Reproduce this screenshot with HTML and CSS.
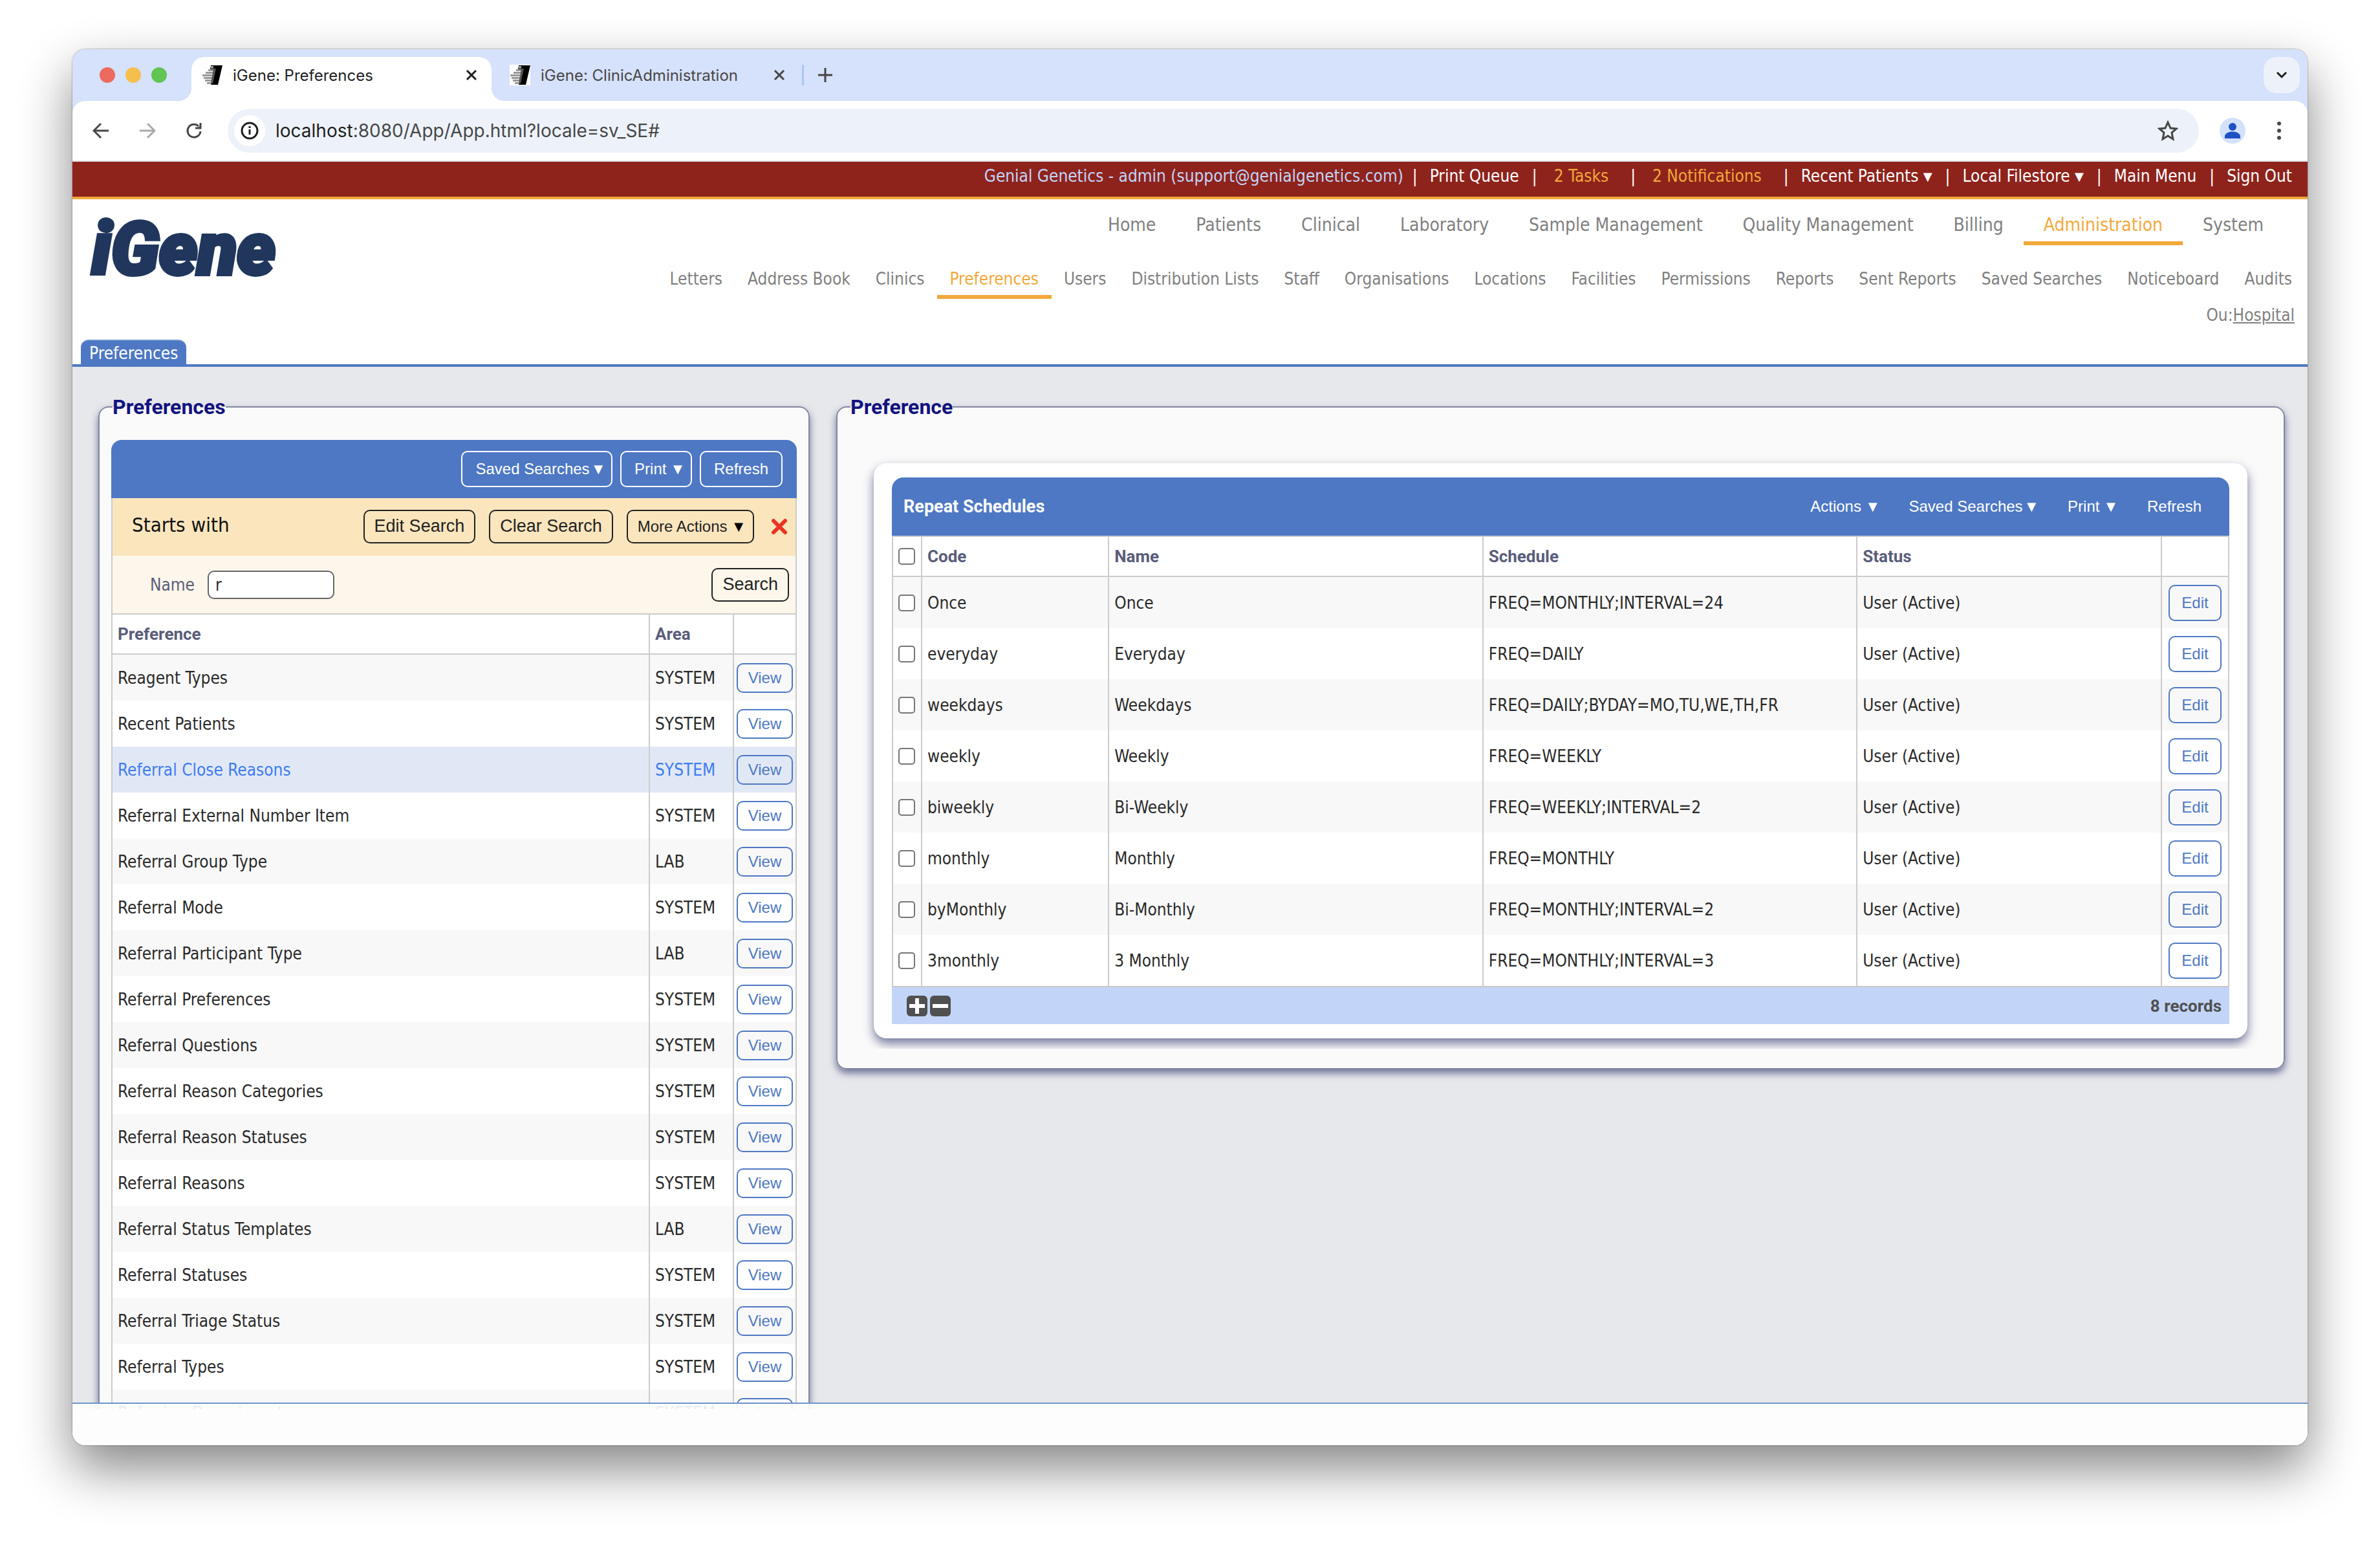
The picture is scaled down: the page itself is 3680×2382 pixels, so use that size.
FILE: index.html
```html
<!DOCTYPE html>
<html lang="en">
<head>
  <meta charset="UTF-8">
  <title>iGene: Preferences</title>
  <link rel="stylesheet" href="styles.css">
</head>
<body>
  <div class="window">
    <div class="tab-strip">
      <div class="lights">
        <span class="light red"></span>
        <span class="light yellow"></span>
        <span class="light green"></span>
      </div>
      <div class="tab active">
        <svg class="favicon" viewBox="0 0 32 32"><path d="M14 1h18l-7 30H14l5-24h-6z" fill="#000"/><path d="M14 2h4v4h-4zM10 7h8v3h-8zM6 11h11v3H6zM1 15h15v3H1zM3 19h13v3H3zM5 23h10v3H5zM8 27h7v3H8z" fill="#999"/><path d="M18 6h4l-5 23h-3z" fill="#555"/></svg>
        <span class="tab-title">iGene: Preferences</span>
        <button class="tab-close" aria-label="Close tab"><svg viewBox="0 0 18 18"><path d="M2 2l14 14M16 2L2 16"/></svg></button>
      </div>
      <div class="tab">
        <svg class="favicon" viewBox="0 0 32 32"><path d="M0 0h32v32H0z" fill="#fff"/><path d="M14 1h18l-7 30H14l5-24h-6z" fill="#000"/><path d="M14 2h4v4h-4zM10 7h8v3h-8zM6 11h11v3H6zM1 15h15v3H1zM3 19h13v3H3zM5 23h10v3H5zM8 27h7v3H8z" fill="#999"/><path d="M18 6h4l-5 23h-3z" fill="#555"/></svg>
        <span class="tab-title">iGene: ClinicAdministration</span>
        <button class="tab-close" aria-label="Close tab"><svg viewBox="0 0 18 18"><path d="M2 2l14 14M16 2L2 16"/></svg></button>
      </div>
      <button class="new-tab" aria-label="New tab"><svg viewBox="0 0 22 22"><path d="M11 0v22M0 11h22"/></svg></button>
      <button class="tab-search" aria-label="Search tabs"><svg viewBox="0 0 18 12"><path d="M2 2l7 7 7-7"/></svg></button>
    </div>

    <div class="toolbar">
      <button class="tool" aria-label="Back"><svg viewBox="0 0 26 26"><path d="M25 13H3M13 2L2 13l11 11"/></svg></button>
      <button class="tool disabled" aria-label="Forward"><svg viewBox="0 0 26 26"><path d="M1 13h22M13 2l11 11-11 11"/></svg></button>
      <button class="tool" aria-label="Reload"><svg viewBox="0 0 26 26"><path d="M20 6a10 10 0 1 0 3 8M23 1v8h-8"/><path d="M24 4v6h-7z" fill="currentColor" stroke="none"/></svg></button>
      <div class="omnibox">
        <span class="site-info"><svg viewBox="0 0 28 28"><circle cx="14" cy="14" r="12"/><path d="M14 12v8M14 7v3"/></svg></span>
        <span class="url"><b>localhost</b>:8080/App/App.html?locale=sv_SE#</span>
        <button class="star" aria-label="Bookmark"><svg viewBox="0 0 32 32"><path d="M16 3l4 9 9 1-7 6 2 10-8-5-8 5 2-10-7-6 9-1z"/></svg></button>
      </div>
      <button class="avatar" aria-label="Profile"><svg viewBox="0 0 40 40"><circle cx="20" cy="14" r="6"/><path d="M8 32v-3c0-10 24-10 24 0v3z"/></svg></button>
      <button class="dots" aria-label="Menu"><svg viewBox="0 0 8 28"><circle cx="4" cy="3" r="3"/><circle cx="4" cy="14" r="3"/><circle cx="4" cy="25" r="3"/></svg></button>
    </div>

    <div class="user-bar">
      <a href="#" class="account">Genial Genetics - admin (support@genialgenetics.com)</a>|
      <a href="#">Print Queue</a>|
      <a href="#" class="alert">2 Tasks</a>|
      <a href="#" class="alert">2 Notifications</a>|
      <a href="#">Recent Patients <span class="arrow">▼</span></a>|
      <a href="#">Local Filestore <span class="arrow">▼</span></a>|
      <a href="#">Main Menu</a>|
      <a href="#">Sign Out</a>
    </div>

    <header class="header">
      <div class="logo">iGene</div>
      <div class="menus">
        <nav class="main-nav">
          <a href="#">Home</a>
          <a href="#">Patients</a>
          <a href="#">Clinical</a>
          <a href="#">Laboratory</a>
          <a href="#">Sample Management</a>
          <a href="#">Quality Management</a>
          <a href="#">Billing</a>
          <a href="#" class="current">Administration</a>
          <a href="#">System</a>
        </nav>
        <nav class="sub-nav">
          <a href="#">Letters</a>
          <a href="#">Address Book</a>
          <a href="#">Clinics</a>
          <a href="#" class="current">Preferences</a>
          <a href="#">Users</a>
          <a href="#">Distribution Lists</a>
          <a href="#">Staff</a>
          <a href="#">Organisations</a>
          <a href="#">Locations</a>
          <a href="#">Facilities</a>
          <a href="#">Permissions</a>
          <a href="#">Reports</a>
          <a href="#">Sent Reports</a>
          <a href="#">Saved Searches</a>
          <a href="#">Noticeboard</a>
          <a href="#">Audits</a>
        </nav>
        <div class="ou">Ou:<a href="#">Hospital</a></div>
      </div>
    </header>
    <div class="page-tabs"><a href="#" class="page-tab">Preferences</a></div>

    <main class="content">
      <fieldset class="panel">
        <legend>Preferences</legend>
        <div class="list">
          <div class="list-bar">
            <button class="outline">Saved Searches <span class="arrow">▼</span></button>
            <button class="outline">Print <span class="arrow spaced">▼</span></button>
            <button class="outline">Refresh</button>
          </div>
          <div class="search-bar">
            <span class="search-title">Starts with</span>
            <button class="dark">Edit Search</button>
            <button class="dark">Clear Search</button>
            <button class="dark small">More Actions <span class="arrow spaced">▼</span></button>
            <button class="remove" aria-label="Remove search"><svg viewBox="0 0 26 26"><path d="M4 4l18 18M22 4L4 22"/></svg></button>
          </div>
          <form class="search-form">
            <label for="name">Name</label>
            <input type="text" id="name" name="name" value="r">
            <button type="button" class="dark">Search</button>
          </form>
          <table class="grid preferences">
            <colgroup><col><col class="col-area"><col class="col-view"></colgroup>
            <thead>
              <tr><th>Preference</th><th>Area</th><th></th></tr>
            </thead>
            <tbody id="preferenceRows"></tbody>
          </table>
        </div>
      </fieldset>

      <fieldset class="panel">
        <legend>Preference</legend>
        <div class="card-wrap">
          <div class="card">
            <div class="card-bar">
              <h2>Repeat Schedules</h2>
              <button>Actions <span class="arrow spaced">▼</span></button>
              <button>Saved Searches <span class="arrow">▼</span></button>
              <button>Print <span class="arrow spaced">▼</span></button>
              <button>Refresh</button>
            </div>
            <table class="grid schedules">
              <colgroup><col class="col-check"><col class="col-code"><col class="col-name"><col class="col-schedule"><col><col class="col-edit"></colgroup>
              <thead>
                <tr>
                  <th class="check"><input type="checkbox" aria-label="Select all"></th>
                  <th>Code</th><th>Name</th><th>Schedule</th><th>Status</th><th></th>
                </tr>
              </thead>
              <tbody id="scheduleRows"></tbody>
            </table>
            <div class="card-footer">
              <button class="square" aria-label="Add"><svg viewBox="0 0 32 32"><path d="M16 4v24M4 16h24"/></svg></button>
              <button class="square" aria-label="Remove"><svg viewBox="0 0 32 32"><path d="M4 16h24"/></svg></button>
              <span class="count">8 records</span>
            </div>
          </div>
        </div>
      </fieldset>
    </main>
    <footer class="status-bar"></footer>
  </div>

  <script>
    const preferences = [
      ['Reagent Types', 'SYSTEM'],
      ['Recent Patients', 'SYSTEM'],
      ['Referral Close Reasons', 'SYSTEM'],
      ['Referral External Number Item', 'SYSTEM'],
      ['Referral Group Type', 'LAB'],
      ['Referral Mode', 'SYSTEM'],
      ['Referral Participant Type', 'LAB'],
      ['Referral Preferences', 'SYSTEM'],
      ['Referral Questions', 'SYSTEM'],
      ['Referral Reason Categories', 'SYSTEM'],
      ['Referral Reason Statuses', 'SYSTEM'],
      ['Referral Reasons', 'SYSTEM'],
      ['Referral Status Templates', 'LAB'],
      ['Referral Statuses', 'SYSTEM'],
      ['Referral Triage Status', 'SYSTEM'],
      ['Referral Types', 'SYSTEM'],
      ['Referring Department', 'SYSTEM']
    ];

    const schedules = [
      ['Once', 'Once', 'FREQ=MONTHLY;INTERVAL=24'],
      ['everyday', 'Everyday', 'FREQ=DAILY'],
      ['weekdays', 'Weekdays', 'FREQ=DAILY;BYDAY=MO,TU,WE,TH,FR'],
      ['weekly', 'Weekly', 'FREQ=WEEKLY'],
      ['biweekly', 'Bi-Weekly', 'FREQ=WEEKLY;INTERVAL=2'],
      ['monthly', 'Monthly', 'FREQ=MONTHLY'],
      ['byMonthly', 'Bi-Monthly', 'FREQ=MONTHLY;INTERVAL=2'],
      ['3monthly', '3 Monthly', 'FREQ=MONTHLY;INTERVAL=3']
    ];

    const selected = 'Referral Close Reasons';

    document.getElementById('preferenceRows').innerHTML = preferences.map(([name, area]) => `
      <tr class="${name === selected ? 'selected' : ''}">
        <td>${name}</td>
        <td>${area}</td>
        <td class="action"><button>View</button></td>
      </tr>
    `).join('');

    document.getElementById('scheduleRows').innerHTML = schedules.map(([code, name, rule]) => `
      <tr>
        <td class="check"><input type="checkbox" aria-label="Select ${code}"></td>
        <td>${code}</td>
        <td>${name}</td>
        <td>${rule}</td>
        <td>User (Active)</td>
        <td class="action"><button>Edit</button></td>
      </tr>
    `).join('');
  </script>
</body>
</html>
```

FILE: styles.css
```css
* {
  box-sizing: border-box;
}
body {
  margin: 0;
  padding: 76px 112px 148px;
  height: 100vh;
  background: #fff;
  font-family: "DejaVu Sans Condensed", "Noto Sans", sans-serif;
  font-size: 26px;
  color: #2a2a2a;
}
a {
  color: inherit;
  text-decoration: none;
}
button {
  margin: 0;
  padding: 0;
  border: none;
  background: none;
  font-family: "Liberation Sans", Arial, sans-serif;
  font-size: 24px;
  color: inherit;
  cursor: pointer;
}
svg {
  display: block;
  fill: none;
  stroke: currentColor;
}
.favicon {
  width: 32px;
  height: 32px;
  stroke: none;
}
.window {
  display: flex;
  flex-direction: column;
  height: 100%;
  overflow: hidden;
  border-radius: 20px;
  background: linear-gradient(#d6e1fb 50%, #fff 50%);
  box-shadow: 0 0 2px rgba(0,0,0,0.6), 0 36px 80px rgba(0,0,0,0.48);
}

/* browser chrome */
.tab-strip {
  display: flex;
  align-items: center;
  height: 80px;
  padding: 0 12px 0 42px;
  background: #d6e1fb;
  font-family: Inter, sans-serif;
  font-size: 24px;
  color: #474747;
}
.lights {
  display: flex;
  gap: 16px;
  margin-right: 38px;
}
.light {
  width: 24px;
  height: 24px;
  border-radius: 50%;
}
.red {
  background: #ed6a5e;
}
.yellow {
  background: #f5bf4f;
}
.green {
  background: #61c554;
}
.tab {
  display: flex;
  align-items: center;
  align-self: flex-end;
  gap: 16px;
  width: 480px;
  height: 68px;
  padding: 0 26px 12px 28px;
}
.tab.active {
  position: relative;
  width: 464px;
  padding: 0 22px 12px 16px;
  border-radius: 20px 20px 0 0;
  background: #fff;
  color: #1f1f1f;
}
/* flared feet of the active tab */
.tab.active::before, .tab.active::after {
  content: "";
  position: absolute;
  bottom: 0;
  width: 20px;
  height: 20px;
}
.tab.active::before {
  left: -20px;
  background: radial-gradient(circle at 0 0, #d6e1fb 20px, #fff 20px);
}
.tab.active::after {
  right: -20px;
  background: radial-gradient(circle at 100% 0, #d6e1fb 20px, #fff 20px);
}
.tab-title {
  flex: 1;
  white-space: nowrap;
}
.tab-close svg {
  width: 18px;
  height: 18px;
  stroke-width: 3;
}
.new-tab {
  padding: 5px 22px;
  border-left: 3px solid #a8c7fa;
  color: #444;
}
.new-tab svg {
  width: 22px;
  height: 22px;
  stroke-width: 3;
}
.tab-search {
  display: grid;
  place-items: center;
  width: 56px;
  height: 56px;
  margin-left: auto;
  border-radius: 20px;
  background: #edf2fa;
  color: #1f1f1f;
}
.tab-search svg {
  width: 18px;
  height: 12px;
  stroke-width: 3;
}
.toolbar {
  display: flex;
  align-items: center;
  height: 94px;
  padding: 0 40px 0 31px;
  border-bottom: 2px solid #dfe1e0;
  border-radius: 20px 20px 0 0;
  background: #fff;
  color: #474747;
}
.tool {
  margin-right: 46px;
}
.tool svg {
  width: 26px;
  height: 26px;
  stroke-width: 3;
}
.tool.disabled {
  color: #aaa;
}
.omnibox {
  display: flex;
  flex: 1;
  align-items: center;
  gap: 16px;
  height: 68px;
  margin-left: -7px;
  padding: 0 32px 0 10px;
  border-radius: 34px;
  background: #edf2fa;
  font-family: Inter, sans-serif;
  font-size: 28px;
}
.site-info {
  display: grid;
  place-items: center;
  width: 48px;
  height: 48px;
  border-radius: 50%;
  background: #fff;
  color: #1f1f1f;
}
.site-info svg {
  width: 28px;
  height: 28px;
  stroke-width: 3;
}
.url {
  flex: 1;
}
.url b {
  font-weight: normal;
  color: #1f1f1f;
}
.star svg {
  width: 32px;
  height: 32px;
  stroke-width: 3;
}
.avatar {
  margin: 0 48px 0 32px;
  border-radius: 50%;
  background: #d3e1fb;
}
.avatar svg {
  width: 40px;
  height: 40px;
  fill: #1f51c4;
  stroke: none;
}
.dots svg {
  width: 8px;
  height: 28px;
  fill: #474747;
  stroke: none;
}

/* application header */
.user-bar {
  display: flex;
  justify-content: flex-end;
  height: 58px;
  padding: 6px 4px 0 0;
  border-bottom: 4px solid #f2a83b;
  background: #8e231c;
  color: #fff;
  line-height: 32px;
  white-space: nowrap;
}
.user-bar a {
  padding: 0 20px 0 19px;
}
.user-bar a.account {
  padding-right: 14px;
  color: #c2d5f8;
}
.user-bar a.alert {
  padding: 0 34px 0 26px;
  color: #f2a83b;
}
.arrow {
  font-family: "DejaVu Sans", sans-serif;
  font-size: 18px;
  line-height: 18px;
  vertical-align: 2px;
}
.arrow.spaced {
  margin-left: 4px;
}
.header {
  display: flex;
  justify-content: space-between;
  height: 217px;
  background: #fff;
  color: #808080;
}
.logo {
  padding-left: 30px;
  font-family: Roboto, sans-serif;
  font-size: 112px;
  font-weight: 900;
  font-style: italic;
  line-height: 156px;
  color: #21365c;
  -webkit-text-stroke: 6px #21365c;
}
.menus {
  display: flex;
  flex-direction: column;
  align-items: flex-end;
  padding-top: 20px;
  white-space: nowrap;
}
.main-nav, .sub-nav {
  display: flex;
}
.main-nav {
  padding-right: 37px;
  font-size: 28px;
  line-height: 40px;
}
.main-nav a {
  padding: 0 31px 5px;
  border-bottom: 6px solid transparent;
}
.sub-nav {
  margin-top: 34px;
  padding-right: 4px;
  line-height: 36px;
}
.sub-nav a {
  padding: 0 20px 7px 19px;
  border-bottom: 6px solid transparent;
}
.main-nav a.current, .sub-nav a.current {
  border-color: #f2a83b;
  color: #f2a83b;
}
.ou {
  margin-top: 8px;
  padding-right: 20px;
  line-height: 34px;
}
.ou a {
  text-decoration: underline;
}
.page-tabs {
  display: flex;
  height: 42px;
  padding-left: 13px;
  border-bottom: 4px solid #4e78c4;
  background: #fff;
}
.page-tab {
  padding: 0 13px;
  border-top: 2px solid #6e95cc;
  border-radius: 12px 12px 0 0;
  background: #4e78c4;
  color: #fff;
  line-height: 38px;
}

/* panels */
.content {
  display: grid;
  flex: 1;
  grid-template-columns: 1100fr 2240fr;
  align-items: start;
  gap: 41px;
  min-height: 0;
  overflow: hidden;
  padding: 42px 35px 0 40px;
  background: #e7e8ec;
}
.panel {
  min-width: 0;
  margin: 0;
  padding: 0 18px 30px;
  border: 2px solid #8386a0;
  border-radius: 16px;
  background: #fafafa;
  box-shadow: 0 6px 12px rgba(60,65,115,0.7);
}
.panel legend {
  margin-left: 2px;
  padding: 0;
  font-family: Roboto, sans-serif;
  font-size: 32px;
  font-weight: bold;
  line-height: 40px;
  color: #12127f;
}
.list {
  margin-top: 31px;
}
.list-bar {
  display: flex;
  align-items: center;
  justify-content: flex-end;
  gap: 12px;
  height: 90px;
  padding: 0 22px;
  border-radius: 16px 16px 0 0;
  background: #4e78c4;
  color: #fff;
}
.outline {
  height: 56px;
  padding: 0 20px;
  border: 2px solid #fff;
  border-radius: 10px;
}
.outline:has(.arrow) {
  padding-right: 13px;
}
.search-bar, .search-form {
  display: flex;
  align-items: center;
  border: 2px solid #ccc;
  border-width: 0 2px;
}
.search-bar {
  gap: 21px;
  height: 89px;
  padding: 0 12px 2px 30px;
  background: #fae5bd;
}
.search-title {
  flex: 1;
  padding-bottom: 6px;
  font-size: 31px;
  color: #111;
}
.dark {
  height: 52px;
  padding: 0 15px;
  border: 2px solid #222;
  border-radius: 10px;
  font-size: 27px;
  color: #222;
}
.dark.small {
  font-size: 24px;
}
.dark.small .arrow {
  color: #000;
}
.remove {
  margin-left: 5px;
  color: #ea3323;
}
.remove svg {
  width: 26px;
  height: 26px;
  stroke-width: 6;
  stroke-linecap: round;
}
.search-form {
  gap: 20px;
  height: 89px;
  padding: 0 10px 0 58px;
  background: #fdf6ea;
}
.search-form label {
  color: #5a5d7a;
}
.search-form input {
  width: 196px;
  height: 44px;
  padding: 0 10px;
  border: 2px solid #666;
  border-radius: 10px;
  background: #fff;
  font-family: inherit;
  font-size: 26px;
  color: #2a2a2a;
}
.search-form .dark {
  margin-left: auto;
}
.grid {
  width: 100%;
  table-layout: fixed;
  border-spacing: 0;
  border-top: 2px solid #ccc;
  border-left: 2px solid #ccc;
}
.grid th, .grid td {
  padding: 0 8px;
  border-right: 2px solid #ccc;
  text-align: left;
  white-space: nowrap;
}
.grid th {
  height: 62px;
  border-bottom: 2px solid #ccc;
  background: #fff;
  font-family: Roboto, sans-serif;
  color: #5a5d7a;
}
.grid td {
  height: 71px;
  background: #fff;
}
.grid tr:nth-child(odd) td {
  background: #f8f8f8;
}
.grid .selected td, .grid .selected:nth-child(odd) td {
  background: #e1e8f5;
  color: #3f7cf4;
}
.grid td.action {
  padding: 0;
  text-align: center;
}
.action button {
  width: 87px;
  height: 46px;
  border: 2px solid #4e78c4;
  border-radius: 10px;
  color: #4e78c4;
}
.col-area {
  width: 130px;
}
.col-view {
  width: 97px;
}
.schedules td {
  height: 79px;
}
.schedules .action button {
  width: 82px;
  height: 56px;
}
.col-check {
  width: 45px;
}
.col-code {
  width: 14%;
}
.col-name, .col-schedule {
  width: 28%;
}
.col-edit {
  width: 104px;
}
.check input {
  display: block;
  appearance: none;
  width: 26px;
  height: 26px;
  margin: 0;
  border: 2px solid #767676;
  border-radius: 5px;
  background: #fff;
}
.card-wrap {
  overflow: hidden;
  padding: 67px 38px 16px;
}
.card {
  padding: 22px 28px;
  border-radius: 20px;
  background: #fff;
  box-shadow: 0 8px 16px rgba(60,65,115,0.7);
}
.card-bar {
  display: flex;
  align-items: center;
  gap: 47px;
  height: 90px;
  padding: 0 43px 0 18px;
  border-radius: 18px 18px 0 0;
  background: #4e78c4;
  color: #fff;
}
.card-bar h2 {
  flex: 1;
  margin: 0;
  font-family: Roboto, sans-serif;
  font-size: 27px;
}
.card-bar button:has(.spaced) {
  padding: 0 2px;
}
.card-footer {
  display: flex;
  align-items: center;
  gap: 4px;
  height: 59px;
  padding: 0 12px 0 23px;
  border-top: 2px solid #c8c8c8;
  background: #c2d5f8;
}
.square {
  border-radius: 6px;
  background: #505050;
  color: #fff;
}
.square svg {
  width: 32px;
  height: 32px;
  stroke-width: 6;
}
.count {
  margin-left: auto;
  font-family: Roboto, sans-serif;
  font-weight: bold;
  color: #505050;
}
/* sits over the last rows of the list, which show faintly through it */
.status-bar {
  position: relative;
  height: 66px;
  margin-top: -10px;
  border-top: 2px solid #6e95cc;
  background: rgba(253,253,253,0.92);
}
```
